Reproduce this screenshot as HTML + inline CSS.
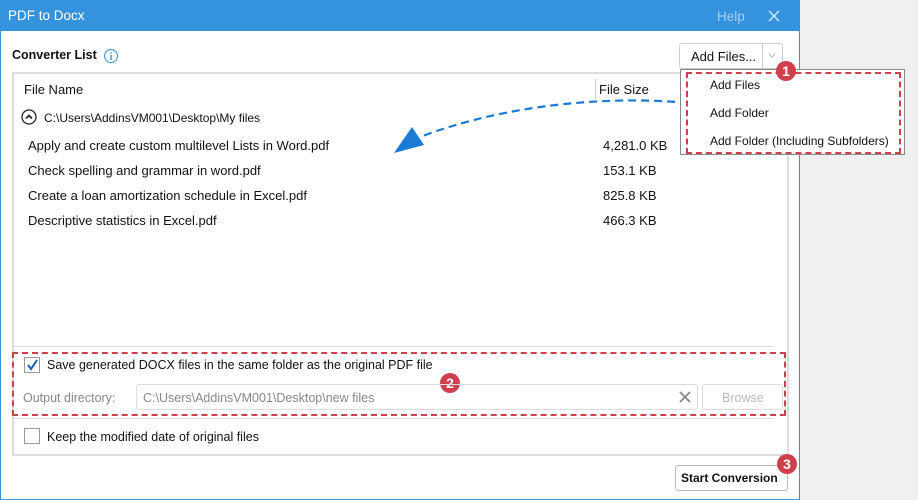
<!DOCTYPE html>
<html><head><meta charset="utf-8"><style>
*{margin:0;padding:0;box-sizing:border-box}
body{width:918px;height:500px;background:#f0f0f0;font-family:"Liberation Sans",sans-serif;font-size:12.5px;color:#111;position:relative;overflow:hidden}
.win{position:absolute;left:0;top:0;width:800px;height:500px;background:#fff;border:1px solid #3592dc;border-top:none}
.title{position:absolute;left:0;top:0;width:800px;height:31px;background:#3592dc;color:#fff;font-size:13.5px}
.abs{position:absolute;white-space:nowrap}
.badge{position:absolute;width:20px;height:20px;border-radius:50%;background:#d0404c;color:#fff;font-weight:bold;font-size:14px;text-align:center;line-height:20px}
.dash{position:absolute;border:2px dashed #d0404c}
.row{font-size:13px}
</style></head><body>
<div class="win"></div>
<div class="title"><span class="abs" style="left:8px;top:8px">PDF to Docx</span><span class="abs" style="left:717px;top:9px;color:#a8d0f0">Help</span>
<svg class="abs" style="left:768px;top:10px" width="12" height="12"><path d="M1 1L11 11M11 1L1 11" stroke="#d8ebfa" stroke-width="1.3"/></svg></div>
<span class="abs" style="left:12px;top:48px;font-weight:bold">Converter List</span>
<svg class="abs" style="left:103px;top:48px" width="16" height="16"><circle cx="8" cy="8" r="6.5" fill="none" stroke="#3592dc"/><path d="M8 7v5M8 4.5v1.2" stroke="#3592dc" stroke-width="1.4"/></svg>
<div class="abs" style="left:679px;top:43px;width:104px;height:26px;border:1px solid #ccc;border-radius:3px;background:#fff"></div>
<div class="abs" style="left:762px;top:44px;width:1px;height:24px;background:#ccc"></div>
<span class="abs" style="left:691px;top:49px;font-size:13px">Add Files...</span>
<svg class="abs" style="left:768px;top:53px" width="8" height="6"><path d="M1 1l3 3 3-3" stroke="#bbb" fill="none"/></svg>
<div class="abs" style="left:12px;top:72px;width:777px;height:384px;border:2px solid #ddd"></div>
<span class="abs row" style="left:24px;top:82px">File Name</span>
<div class="abs" style="left:595px;top:79px;width:1px;height:20px;background:#ccc"></div>
<span class="abs row" style="left:599px;top:82px">File Size</span>
<svg class="abs" style="left:21px;top:109px" width="16" height="16"><circle cx="8" cy="8" r="7" fill="none" stroke="#222" stroke-width="1.3"/><path d="M5 9.5l3-3 3 3" stroke="#222" stroke-width="1.8" fill="none"/></svg>
<span class="abs" style="left:44px;top:111px;font-size:12px">C:\Users\AddinsVM001\Desktop\My files</span>
<span class="abs row" style="left:28px;top:138px">Apply and create custom multilevel Lists in Word.pdf</span>
<span class="abs row" style="left:28px;top:163px">Check spelling and grammar in word.pdf</span>
<span class="abs row" style="left:28px;top:188px">Create a loan amortization schedule in Excel.pdf</span>
<span class="abs row" style="left:28px;top:213px">Descriptive statistics in Excel.pdf</span>
<span class="abs row" style="left:603px;top:138px">4,281.0 KB</span>
<span class="abs row" style="left:603px;top:163px">153.1 KB</span>
<span class="abs row" style="left:603px;top:188px">825.8 KB</span>
<span class="abs row" style="left:603px;top:213px">466.3 KB</span>
<svg class="abs" style="left:390px;top:95px" width="300" height="62"><path d="M298 8 C240 2 130 4 30 42" stroke="#1a7ad4" stroke-width="2.2" stroke-dasharray="8 5" fill="none"/><path d="M4 58 L22 32 L34 50 Z" fill="#1a7ad4"/></svg>
<div class="abs" style="left:680px;top:69px;width:225px;height:86px;background:#fff;border:1px solid #888"></div>
<div class="dash" style="left:686px;top:72px;width:215px;height:82px"></div>
<span class="abs" style="left:710px;top:78px;font-size:12px">Add Files</span>
<span class="abs" style="left:710px;top:106px;font-size:12px">Add Folder</span>
<span class="abs" style="left:710px;top:134px;font-size:12px">Add Folder (Including Subfolders)</span>
<div class="badge" style="left:776px;top:61px">1</div>
<div class="abs" style="left:14px;top:346px;width:760px;height:1px;background:#ddd"></div>
<div class="dash" style="left:12px;top:352px;width:774px;height:64px"></div>
<div class="abs" style="left:24px;top:357px;width:16px;height:16px;border:1px solid #999;background:#fff"></div>
<svg class="abs" style="left:25px;top:358px" width="14" height="14"><path d="M3 7l3 4 6-9" stroke="#1a5fb0" stroke-width="2" fill="none"/></svg>
<span class="abs" style="left:47px;top:358px">Save generated DOCX files in the same folder as the original PDF file</span>
<div class="badge" style="left:440px;top:373px">2</div>
<span class="abs" style="left:23px;top:391px;color:#888">Output directory:</span>
<div class="abs" style="left:136px;top:384px;width:562px;height:26px;border:1px solid #ddd;border-radius:3px"></div>
<span class="abs" style="left:143px;top:391px;color:#888">C:\Users\AddinsVM001\Desktop\new files</span>
<svg class="abs" style="left:679px;top:391px" width="12" height="12"><path d="M1 1L11 11M11 1L1 11" stroke="#888" stroke-width="1.8"/></svg>
<div class="abs" style="left:702px;top:384px;width:81px;height:26px;border:1px solid #ddd;border-radius:3px"></div>
<span class="abs" style="left:722px;top:391px;color:#bbb">Browse</span>
<div class="abs" style="left:14px;top:418px;width:760px;height:1px;background:#ddd"></div>
<div class="abs" style="left:24px;top:428px;width:16px;height:16px;border:1px solid #999;background:#fff"></div>
<span class="abs" style="left:47px;top:430px">Keep the modified date of original files</span>
<div class="abs" style="left:675px;top:465px;width:113px;height:26px;border:1px solid #bbb;border-radius:3px;background:#fff"></div>
<span class="abs" style="left:681px;top:471px;font-weight:bold;font-size:12px">Start Conversion</span>
<div class="badge" style="left:777px;top:454px">3</div>
</body></html>
